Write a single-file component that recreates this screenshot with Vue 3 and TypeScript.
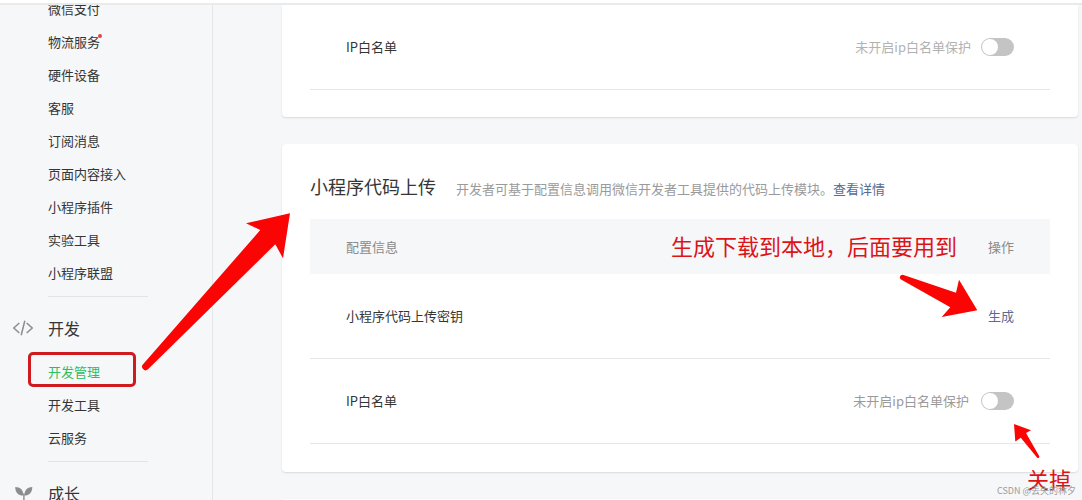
<script setup lang="ts">
import { ref } from 'vue'

interface NavItem {
  label: string
  dot?: boolean
  active?: boolean
}

const featureItems: NavItem[] = [
  { label: '微信支付' },
  { label: '物流服务', dot: true },
  { label: '硬件设备' },
  { label: '客服' },
  { label: '订阅消息' },
  { label: '页面内容接入' },
  { label: '小程序插件' },
  { label: '实验工具' },
  { label: '小程序联盟' },
]

const devItems: NavItem[] = [
  { label: '开发管理', active: true },
  { label: '开发工具' },
  { label: '云服务' },
]

const serverWhitelist = ref(false)
const uploadWhitelist = ref(false)
</script>

<template>
  <div class="page">
    <header class="topbar"></header>
    <div class="body">
      <nav class="sidebar">
        <ul class="menu menu-first">
          <li v-for="item in featureItems" :key="item.label">
            <a href="#">{{ item.label }}<i v-if="item.dot" class="dot"></i></a>
          </li>
        </ul>
        <hr class="divider" />
        <h3 class="group">
          <svg class="icon" viewBox="0 0 22 18" fill="none" stroke="#8c8d8e" stroke-width="1.5">
            <path d="M7.3 4 1.8 9l5.5 5M14.7 4l5.5 5-5.5 5M12.8 1.8 9.2 16.2" />
          </svg>
          开发
        </h3>
        <ul class="menu">
          <li v-for="item in devItems" :key="item.label">
            <a href="#" :class="{ active: item.active }">{{ item.label }}<span v-if="item.active" class="frame"></span></a>
          </li>
        </ul>
        <hr class="divider" />
        <h3 class="group">
          <svg class="icon" viewBox="0 0 22 18" fill="#8c8d8e">
            <path d="M3.2 3C8.400 3.200 11 5.600 11.600 11.600C6 11.800 3.400 8.600 3.200 3Z" />
            <path d="M20.300 3C15.400 3.200 12.800 5.600 12.200 11.600C17.600 11.600 20.200 8.400 20.300 3Z" />
            <path d="M11.200 9.500h1.400V18H11.200Z" />
          </svg>
          成长
        </h3>
      </nav>

      <main class="content">
        <section class="card card-first">
          <table class="table">
            <tbody>
              <tr>
                <td>IP白名单</td>
                <td class="action">
                  <label class="switch-row pale">
                    <span>未开启ip白名单保护</span>
                    <input v-model="serverWhitelist" type="checkbox" class="switch" />
                  </label>
                </td>
              </tr>
            </tbody>
          </table>
        </section>

        <section class="card">
          <div class="card-head">
            <h2>小程序代码上传</h2>
            <p>开发者可基于配置信息调用微信开发者工具提供的代码上传模块。<a href="#">查看详情</a></p>
          </div>
          <table class="table">
            <thead>
              <tr>
                <th>配置信息</th>
                <th class="action">操作</th>
              </tr>
            </thead>
            <tbody>
              <tr>
                <td>小程序代码上传密钥</td>
                <td class="action"><a href="#">生成</a></td>
              </tr>
              <tr>
                <td>IP白名单</td>
                <td class="action">
                  <label class="switch-row">
                    <span>未开启ip白名单保护</span>
                    <input v-model="uploadWhitelist" type="checkbox" class="switch" />
                  </label>
                </td>
              </tr>
            </tbody>
          </table>
        </section>

        <section class="card"></section>
      </main>
    </div>

    <svg class="mark arrow-section" viewBox="140 210 154 162">
      <path d="M143.300 364 260.300 230 246 223.300 290 213.300 283 258.300 275.300 244.300 148 369.300A3.400 3.400 0 0 1 143.300 364Z" />
    </svg>
    <svg class="mark arrow-generate" viewBox="898 272 82 48">
      <path d="M903.500 275 956 292.700 959 279.700 977.300 310.300 941.700 317 950.300 307.300 901.500 279.700A2.500 2.500 0 0 1 903.500 275Z" />
    </svg>
    <svg class="mark arrow-switch" viewBox="1012 422 30 38">
      <path d="M1014 424 1031 430.300 1026 433 1039 455.800A1.200 1.200 0 0 1 1037 457.500L1020.800 437.700 1015.300 441.500Z" />
    </svg>
    <p class="mark note-generate">生成下载到本地，后面要用到</p>
    <p class="mark note-off">关掉</p>
    <p class="mark watermark">CSDN @丢失的林夕</p>
  </div>
</template>

<style>
body {
  margin: 0;
}
</style>

<style scoped>
.page {
  position: relative;
  display: flex;
  flex-direction: column;
  height: 100vh;
  overflow: hidden;
  background: #f6f7f9;
  color: #353535;
  font-family: "Noto Sans CJK SC", "Liberation Sans", sans-serif;
  font-size: 13px;
  line-height: 20px;
}

.page * {
  box-sizing: border-box;
}

a {
  color: #576b95;
  text-decoration: none;
}

.topbar {
  flex: none;
  height: 5px;
  background: #fff;
  border-bottom: 2px solid #e9eaeb;
}

.body {
  display: flex;
  flex: 1;
  min-height: 0;
  overflow: hidden;
}

.sidebar {
  flex: none;
  width: 213px;
  border-right: 1px solid #e4e6e8;
}

.menu {
  margin: 0;
  padding: 0 0 0 48px;
  list-style: none;
}

.menu-first {
  margin-top: -13px;
}

.menu li {
  height: 33px;
}

.menu a {
  position: relative;
  display: inline-block;
  line-height: 33px;
  color: #353535;
}

.menu a.active {
  color: #2dbe60;
}

.dot {
  position: absolute;
  top: 9px;
  right: -2px;
  width: 4px;
  height: 4px;
  border-radius: 50%;
  background: #e0434c;
}

.frame {
  position: absolute;
  top: -3px;
  left: -20px;
  width: 108px;
  height: 35px;
  border: 3px solid #cf1b20;
  border-radius: 5px;
}

.divider {
  width: 100px;
  height: 1px;
  margin: 7px 0 0 48px;
  border: 0;
  background: #e2e4e6;
}

.group {
  display: flex;
  align-items: center;
  gap: 14px;
  height: 32px;
  margin: 15px 0 11px;
  padding-left: 12px;
  font-size: 16px;
  font-weight: 400;
}

.icon {
  width: 22px;
  height: 18px;
}

.content {
  flex: 1;
  min-width: 0;
  padding: 0 4px 0 69px;
}

.card {
  min-height: 60px;
  margin-bottom: 27px;
  padding: 27px 28px 28px;
  background: #fff;
  border-radius: 4px;
  box-shadow: 0 1px 2px rgba(0, 0, 0, 0.12);
}

.card-first {
  padding-top: 0;
  padding-bottom: 27px;
  border-radius: 0 0 4px 4px;
}

.card-head {
  display: flex;
  align-items: baseline;
  gap: 20px;
  margin-bottom: 18px;
  white-space: nowrap;
}

.card-head h2 {
  margin: 0;
  font-size: 18px;
  font-weight: 400;
  line-height: 30px;
}

.card-head p {
  margin: 0;
  color: #9a9a9a;
}

.table {
  width: 100%;
  border-collapse: separate;
  border-spacing: 0;
}

.table th,
.table td {
  padding: 0 36px;
  text-align: left;
  font-weight: 400;
}

.table th {
  height: 55px;
  background: #f6f7f9;
  color: #8a8a8a;
}

.table td {
  height: 85px;
  border-bottom: 1px solid #e6e7e8;
}

.table .action {
  text-align: right;
}

.switch-row {
  display: flex;
  align-items: center;
  justify-content: flex-end;
  gap: 12px;
  color: #9a9a9a;
}

.switch-row.pale {
  gap: 10px;
  color: #b2b2b2;
}

.switch {
  display: flex;
  align-items: center;
  width: 33px;
  height: 18px;
  margin: 0;
  padding: 1px;
  appearance: none;
  border-radius: 9px;
  background: #c4c4c4;
}

.switch::before {
  content: "";
  width: 16px;
  height: 16px;
  border-radius: 50%;
  background: #fff;
}

.switch:checked {
  justify-content: flex-end;
  background: #07c160;
}

.mark {
  position: absolute;
  margin: 0;
  fill: #fb0404;
  white-space: nowrap;
  pointer-events: none;
}

.arrow-section {
  top: 210px;
  left: 140px;
  width: 154px;
  height: 162px;
}

.arrow-generate {
  top: 272px;
  right: 102px;
  width: 82px;
  height: 48px;
}

.arrow-switch {
  top: 422px;
  right: 40px;
  width: 30px;
  height: 38px;
}

.note-generate,
.note-off {
  color: #dc1418;
  font-size: 22px;
  line-height: 32px;
}

.note-generate {
  top: 229px;
  right: 125px;
}

.note-off {
  top: 462px;
  right: 11px;
}

.watermark {
  top: 481px;
  right: 6px;
  color: #9b9b9b;
  font-size: 9px;
}
</style>
